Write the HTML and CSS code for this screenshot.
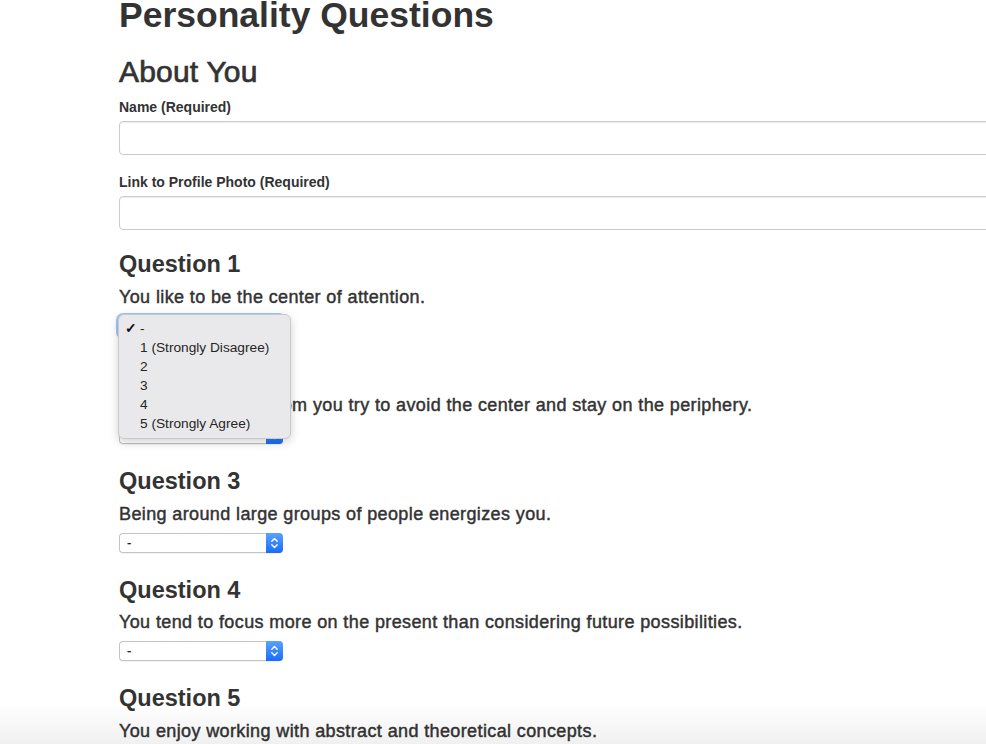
FILE: index.html
```html
<!DOCTYPE html>
<html lang="en">
<head>
<meta charset="utf-8">
<title>Personality Questions</title>
<link rel="stylesheet" href="styles.css">
</head>
<body>
<div class="page">
  <h1 class="title">Personality Questions</h1>
  <h2 class="section-title">About You</h2>
  <label class="field-label first">Name (Required)</label>
  <div class="text-input"></div>
  <label class="field-label">Link to Profile Photo (Required)</label>
  <div class="text-input"></div>

  <div class="question first-q">
    <h3 class="q-title">Question 1</h3>
    <p class="q-text">You like to be the center of attention.</p>
    <div class="select-wrap">
      <div class="select focused"><span class="select-value">-</span><span class="stepper"><svg width="17" height="20" viewBox="0 0 17 20"><path d="M5.8 8.3 L8.5 5.6 L11.2 8.3 M5.8 11.7 L8.5 14.4 L11.2 11.7" fill="none" stroke="#fff" stroke-width="1.4" stroke-linecap="round" stroke-linejoin="round"/></svg></span></div>
      <ul class="menu">
        <li class="menu-item"><span class="check">✓</span>-</li>
        <li class="menu-item">1 (Strongly Disagree)</li>
        <li class="menu-item">2</li>
        <li class="menu-item">3</li>
        <li class="menu-item">4</li>
        <li class="menu-item">5 (Strongly Agree)</li>
      </ul>
    </div>
  </div>

  <div class="question">
    <h3 class="q-title">Question 2</h3>
    <p class="q-text">When you're in a room you try to avoid the center and stay on the periphery.</p>
    <div class="select"><span class="select-value">-</span><span class="stepper"><svg width="17" height="20" viewBox="0 0 17 20"><path d="M5.8 8.3 L8.5 5.6 L11.2 8.3 M5.8 11.7 L8.5 14.4 L11.2 11.7" fill="none" stroke="#fff" stroke-width="1.4" stroke-linecap="round" stroke-linejoin="round"/></svg></span></div>
  </div>

  <div class="question">
    <h3 class="q-title">Question 3</h3>
    <p class="q-text">Being around large groups of people energizes you.</p>
    <div class="select"><span class="select-value">-</span><span class="stepper"><svg width="17" height="20" viewBox="0 0 17 20"><path d="M5.8 8.3 L8.5 5.6 L11.2 8.3 M5.8 11.7 L8.5 14.4 L11.2 11.7" fill="none" stroke="#fff" stroke-width="1.4" stroke-linecap="round" stroke-linejoin="round"/></svg></span></div>
  </div>

  <div class="question">
    <h3 class="q-title">Question 4</h3>
    <p class="q-text">You tend to focus more on the present than considering future possibilities.</p>
    <div class="select"><span class="select-value">-</span><span class="stepper"><svg width="17" height="20" viewBox="0 0 17 20"><path d="M5.8 8.3 L8.5 5.6 L11.2 8.3 M5.8 11.7 L8.5 14.4 L11.2 11.7" fill="none" stroke="#fff" stroke-width="1.4" stroke-linecap="round" stroke-linejoin="round"/></svg></span></div>
  </div>

  <div class="question">
    <h3 class="q-title">Question 5</h3>
    <p class="q-text">You enjoy working with abstract and theoretical concepts.</p>
    <div class="select"><span class="select-value">-</span><span class="stepper"><svg width="17" height="20" viewBox="0 0 17 20"><path d="M5.8 8.3 L8.5 5.6 L11.2 8.3 M5.8 11.7 L8.5 14.4 L11.2 11.7" fill="none" stroke="#fff" stroke-width="1.4" stroke-linecap="round" stroke-linejoin="round"/></svg></span></div>
  </div>
</div>
<div class="bottom-shade"></div>
</body>
</html>
```

FILE: styles.css
```css
html, body {
  margin: 0;
  padding: 0;
  overflow: hidden;
  background: #fff;
}

body {
  font-family: "Liberation Sans", Arial, Helvetica, sans-serif;
  color: #333;
}

.page {
  padding-left: 119px;
  width: 1100px;
}

.title {
  margin: -5px 0 0 0;
  font-size: 35.5px;
  line-height: 40px;
  font-weight: bold;
  white-space: nowrap;
}

.section-title {
  margin: 20px 0 0 0;
  font-size: 30px;
  line-height: 33px;
  font-weight: normal;
  letter-spacing: 0.2px;
  -webkit-text-stroke: 0.7px #333;
}

.field-label {
  display: block;
  margin: 17px 0 0 0;
  font-size: 14px;
  line-height: 20px;
  font-weight: bold;
}

.field-label.first {
  margin-top: 9px;
}

.text-input {
  margin-top: 4px;
  width: 1000px;
  height: 34px;
  box-sizing: border-box;
  border: 1px solid #ccc;
  border-radius: 4px;
  background: #fff;
  box-shadow: inset 0 1px 1px rgba(0, 0, 0, 0.075);
}

.question {
  margin-top: 24px;
}

.question.first-q {
  margin-top: 21px;
}

.q-title {
  margin: 0;
  font-size: 23.5px;
  line-height: 26px;
  font-weight: bold;
}

.q-text {
  margin: 8.5px 0 0 0;
  font-size: 18px;
  line-height: 22px;
  letter-spacing: 0.38px;
  white-space: nowrap;
  -webkit-text-stroke: 0.45px #333;
}

.select-wrap {
  position: relative;
  margin-top: 8px;
  width: 164px;
  height: 20px;
}

.select {
  margin-top: 8px;
  width: 164px;
  height: 20px;
  box-sizing: border-box;
  display: flex;
  align-items: stretch;
  border: 1px solid #c4c4c4;
  border-right: none;
  border-radius: 4px;
  background: #fff;
  box-shadow: 0 1px 1px rgba(0, 0, 0, 0.06);
}

.select-wrap .select {
  margin-top: 0;
}

.select.focused {
  box-shadow: 0 0 0 3px rgba(80, 150, 250, 0.55);
}

.select-value {
  flex: 1;
  padding-left: 7px;
  font-size: 13px;
  line-height: 18px;
  color: #222;
  -webkit-text-stroke: 0.2px #222;
}

.stepper {
  width: 17px;
  margin: -1px 0 -1px 0;
  border-radius: 0 4px 4px 0;
  background: linear-gradient(#5aa2ff, #1a6cf6);
  display: flex;
  align-items: center;
  justify-content: center;
}

.stepper svg {
  display: block;
}

.menu {
  position: absolute;
  left: -1px;
  top: -2px;
  width: 173px;
  margin: 0;
  padding: 4px 0 5px 0;
  list-style: none;
  box-sizing: border-box;
  background: #e9e9eb;
  border: 1px solid #c9c9cb;
  border-radius: 6px;
  box-shadow: 0 3px 10px rgba(0, 0, 0, 0.18);
  z-index: 5;
}

.menu-item {
  position: relative;
  padding-left: 21px;
  font-size: 13.7px;
  line-height: 19px;
  color: #262626;
  white-space: nowrap;
}

.check {
  position: absolute;
  left: 6px;
  top: 0;
  font-size: 14px;
  font-weight: bold;
  color: #111;
}

.bottom-shade {
  position: fixed;
  left: 0;
  right: 0;
  bottom: 0;
  height: 40px;
  background: linear-gradient(to bottom, rgba(0, 0, 0, 0), rgba(0, 0, 0, 0.06));
  pointer-events: none;
}
```
